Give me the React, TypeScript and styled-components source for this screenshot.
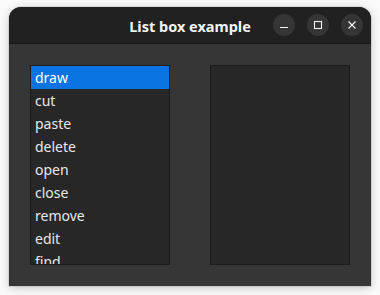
import React from 'react'
import styled, { createGlobalStyle } from 'styled-components'

const GlobalStyle = createGlobalStyle`
  html, body {
    margin: 0;
    padding: 0;
    background: #fafafa;
  }
  body {
    font-family: "Noto Sans", "DejaVu Sans", sans-serif;
  }
`

const items = ['draw', 'cut', 'paste', 'delete', 'open', 'close', 'remove', 'edit', 'find']

const App = () => {
  return (
    <>
      <GlobalStyle />
      <Page>
        <Window>
          <TitleBar>
            <span />
            <Title>List box example</Title>
            <Controls>
              <CtlButton aria-label="minimize">
                <svg width="16" height="16" viewBox="0 0 16 16">
                  <path d="M4 10.5h8" stroke="#f2f2f2" strokeWidth="1.2" />
                </svg>
              </CtlButton>
              <CtlButton aria-label="maximize">
                <svg width="16" height="16" viewBox="0 0 16 16">
                  <rect x="4.5" y="4.5" width="7" height="7" fill="none" stroke="#f2f2f2" strokeWidth="1.1" />
                </svg>
              </CtlButton>
              <CtlButton aria-label="close">
                <svg width="16" height="16" viewBox="0 0 16 16">
                  <path d="M4.5 4.5l7 7M11.5 4.5l-7 7" stroke="#f2f2f2" strokeWidth="1.2" />
                </svg>
              </CtlButton>
            </Controls>
          </TitleBar>
          <Body>
            <ListBox>
              {items.map((it, i) => (
                <Row key={it} selected={i === 0}>{it}</Row>
              ))}
            </ListBox>
            <ListBox />
          </Body>
        </Window>
      </Page>
    </>
  )
}

export default App

const Page = styled.div`
  width: 380px;
  height: 295px;
  padding: 7px 9px;
  box-sizing: border-box;
`

const Window = styled.div`
  width: 362px;
  height: 279px;
  background: #363636;
  border-radius: 12px 12px 0 0;
  overflow: hidden;
  box-shadow: 0 2px 10px rgba(0, 0, 0, 0.22), 0 0 0 1px rgba(0, 0, 0, 0.08);
  display: flex;
  flex-direction: column;
`

const TitleBar = styled.div`
  height: 37px;
  box-sizing: border-box;
  background: #212121;
  border-bottom: 1px solid #181818;
  display: grid;
  grid-template-columns: 1fr auto 1fr;
  align-items: center;
  padding: 0 8px;
`

const Title = styled.div`
  color: #f4f4f4;
  font-weight: 700;
  font-size: 14.5px;
  padding-top: 1px;
`

const Controls = styled.div`
  display: flex;
  justify-content: flex-end;
  gap: 12px;
`

const CtlButton = styled.div`
  width: 22px;
  height: 22px;
  border-radius: 50%;
  background: #353535;
  display: flex;
  align-items: center;
  justify-content: center;
`

const Body = styled.div`
  flex: 1;
  display: flex;
  gap: 40px;
  padding: 21px;
`

const ListBox = styled.div`
  width: 140px;
  height: 200px;
  box-sizing: border-box;
  background: #272727;
  border: 1px solid #1b1b1b;
  overflow: hidden;
`

const Row = styled.div<{ selected?: boolean }>`
  height: 23px;
  line-height: 23px;
  padding-left: 4px;
  font-size: 14px;
  color: ${({ selected }) => (selected ? '#ffffff' : '#e8e8e8')};
  background: ${({ selected }) => (selected ? '#0b74e3' : 'transparent')};
`
